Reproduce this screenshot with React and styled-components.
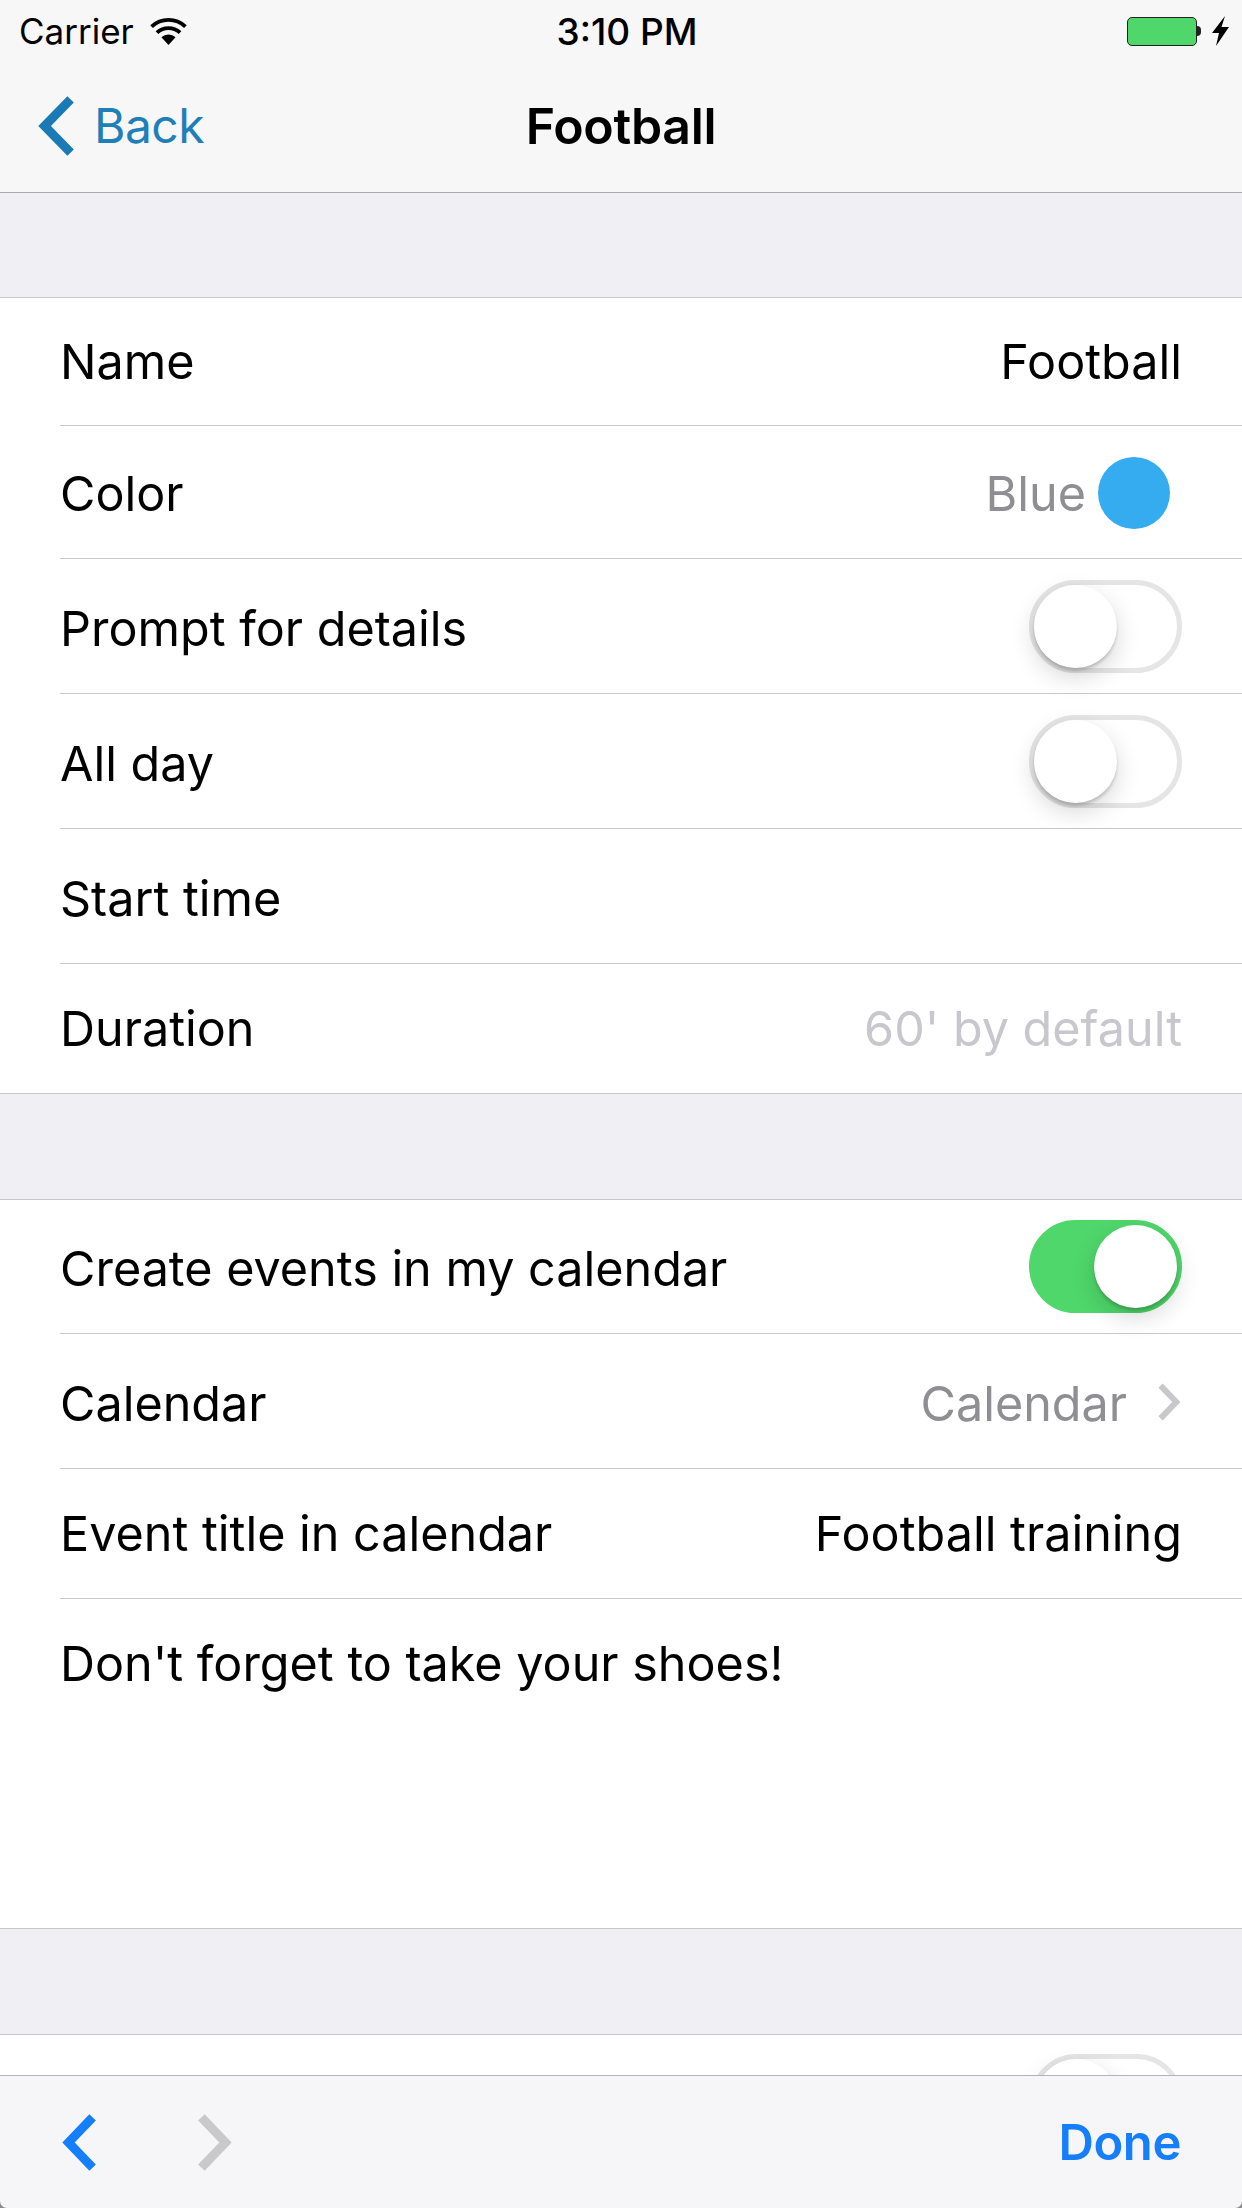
import React from "react";
import styled, { createGlobalStyle } from "styled-components";

const Global = createGlobalStyle`
  html, body { margin: 0; padding: 0; background: #fff; }
  * { box-sizing: border-box; }
`;

const Screen = styled.div`
  width: 1242px;
  height: 2208px;
  display: flex;
  flex-direction: column;
  overflow: hidden;
  background: #8a8a8a;
  font-family: Inter, "Liberation Sans", sans-serif;
  color: #000;
`;

const Header = styled.header`
  flex: none;
  height: 193px;
  background: #f7f7f8;
  border-bottom: 1px solid #a9a9ae;
  display: flex;
  flex-direction: column;
`;

const StatusBar = styled.div`
  height: 62px;
  padding: 0 13px 0 19px;
  display: grid;
  grid-template-columns: 1fr auto 1fr;
  align-items: center;
  font-size: 35px;
`;

const StatusLeft = styled.div`
  display: flex;
  align-items: center;
  gap: 16px;
`;

const StatusRight = styled.div`
  display: flex;
  align-items: center;
  justify-content: flex-end;
  gap: 9px;
`;

const Clock = styled.div`
  font-weight: 500;
  font-size: 37px;
  padding-left: 6px;
`;

const Battery = styled.div`
  width: 70px;
  height: 29px;
  border: 1.5px solid #222;
  border-radius: 5px;
  background: #4fd76b;
  margin-right: 6px;
  position: relative;
  &::after {
    content: "";
    position: absolute;
    left: 69px;
    top: 8px;
    width: 4px;
    height: 10px;
    background: #222;
    border-radius: 0 4px 4px 0;
  }
`;

const NavBar = styled.nav`
  flex: 1;
  padding-bottom: 3px;
  display: grid;
  grid-template-columns: 1fr auto 1fr;
  align-items: center;
`;

const BackLink = styled.div`
  display: flex;
  align-items: center;
  gap: 18px;
  padding-left: 36px;
  color: #1f7fb8;
  font-size: 48px;
  letter-spacing: -0.5px;
`;

const NavTitle = styled.div`
  font-size: 50px;
  font-weight: 600;
  letter-spacing: -0.3px;
`;

const Scroller = styled.main`
  flex: 1;
  min-height: 0;
  overflow: hidden;
  background: #efeff4;
`;

const Group = styled.section`
  background: #fff;
  border-top: 1px solid #c8c7cc;
  border-bottom: 1px solid #c8c7cc;
  margin-top: ${(p) => p.$gap}px;
`;

const Row = styled.div`
  height: ${(p) => p.$h}px;
  margin-left: 60px;
  padding-right: 60px;
  display: flex;
  align-items: ${(p) => (p.$top ? "flex-start" : "center")};
  justify-content: space-between;
  font-size: 48.5px;
  white-space: nowrap;
  padding-top: ${(p) => p.$pt || 0}px;
  padding-bottom: ${(p) => p.$pb || 0}px;
  & + & {
    box-shadow: 0 -1px 0 #c8c7cc;
  }
`;

const Label = styled.span`
  padding-top: ${(p) => p.$dy || 0}px;
`;

const Value = styled.div`
  display: flex;
  align-items: center;
  gap: ${(p) => p.$gap || 0}px;
  color: ${(p) => p.$color || "#000"};
`;

const ColorDot = styled.span`
  width: 72px;
  height: 72px;
  border-radius: 50%;
  background: #36acf0;
  margin-right: 12px;
`;

const Track = styled.div`
  width: 153px;
  height: 93px;
  border-radius: 47px;
  border: 5px solid ${(p) => (p.$on ? "#4fd76b" : "#e5e5e5")};
  background: ${(p) => (p.$on ? "#4fd76b" : "#fff")};
  display: flex;
  justify-content: ${(p) => (p.$on ? "flex-end" : "flex-start")};
  align-items: center;
`;

const Knob = styled.div`
  width: 83px;
  height: 83px;
  border-radius: 50%;
  background: #fff;
  box-shadow: 0 3px 3px rgba(0, 0, 0, 0.16), 0 9px 24px rgba(0, 0, 0, 0.16);
`;

const Toolbar = styled.footer`
  flex: none;
  height: 133px;
  background: #f6f6f8;
  border-top: 1px solid #b2b2b2;
  border-radius: 0 0 7px 7px;
  padding: 0 61px 0 60px;
  display: flex;
  align-items: center;
  gap: 98px;
`;

const DoneButton = styled.div`
  margin-left: auto;
  color: #157efb;
  font-size: 49px;
  font-weight: 600;
  letter-spacing: -0.4px;
`;

const Clip = styled.div`
  height: 41px;
  overflow: hidden;
  background: #fff;
  padding: 19px 59px 0 0;
  display: flex;
  justify-content: flex-end;
  align-items: flex-start;
  border-top: 1px solid #c8c7cc;
  margin-top: 105px;
`;

const WifiIcon = () => (
  <svg width="37" height="28" viewBox="0 0 35 27" preserveAspectRatio="none">
    <path d="M17.5 27 L10.8 19.6 A9.8 9.8 0 0 1 24.2 19.6 Z" fill="#000" />
    <path d="M6.6 15 A15.8 15.8 0 0 1 28.4 15" fill="none" stroke="#000" strokeWidth="3.6" />
    <path d="M1.5 9.2 A23 23 0 0 1 33.5 9.2" fill="none" stroke="#000" strokeWidth="3.6" />
  </svg>
);

const BoltIcon = () => (
  <svg width="17" height="30" viewBox="0 0 17 30">
    <path d="M13 0 L0 17 L7 17 L4 30 L17 11 L9.5 11 Z" fill="#000" />
  </svg>
);

const Chevron = ({ w, h, sw, color, left }) => (
  <svg width={w} height={h} viewBox={`0 0 ${w} ${h}`}>
    <path
      d={left
        ? `M${w - sw * 0.6} ${sw * 0.6} L${sw * 0.95} ${h / 2} L${w - sw * 0.6} ${h - sw * 0.6}`
        : `M${sw * 0.6} ${sw * 0.6} L${w - sw * 0.95} ${h / 2} L${sw * 0.6} ${h - sw * 0.6}`}
      fill="none"
      stroke={color}
      strokeWidth={sw}
    />
  </svg>
);

const Switch = ({ on }) => (
  <Track $on={on}>
    <Knob />
  </Track>
);

export default function App() {
  return (
    <Screen>
      <Global />
      <Header>
        <StatusBar>
          <StatusLeft>
            Carrier
            <WifiIcon />
          </StatusLeft>
          <Clock>3:10 PM</Clock>
          <StatusRight>
            <Battery />
            <BoltIcon />
          </StatusRight>
        </StatusBar>
        <NavBar>
          <BackLink>
            <Chevron w={40} h={64} sw={9} color="#1a7ab5" left />
            Back
          </BackLink>
          <NavTitle>Football</NavTitle>
        </NavBar>
      </Header>
      <Scroller>
        <Group $gap={104}>
          <Row $h={128} $pb={2}>
            <Label>Name</Label>
            <Value>Football</Value>
          </Row>
          <Row $h={133}>
            <Label $dy={2}>Color</Label>
            <Value $color="#8e8e93" $gap={12}>
              <Label $dy={2}>Blue</Label>
              <ColorDot />
            </Value>
          </Row>
          <Row $h={135}>
            <Label $dy={4}>Prompt for details</Label>
            <Switch />
          </Row>
          <Row $h={135}>
            <Label $dy={3}>All day</Label>
            <Switch />
          </Row>
          <Row $h={135}>
            <Label $dy={3}>Start time</Label>
          </Row>
          <Row $h={129}>
            <Label>Duration</Label>
            <Value $color="#c7c7cd">60' by default</Value>
          </Row>
        </Group>
        <Group $gap={105}>
          <Row $h={134} $pb={2}>
            <Label $dy={5}>Create events in my calendar</Label>
            <Switch on />
          </Row>
          <Row $h={135}>
            <Label $dy={3}>Calendar</Label>
            <Value $color="#8e8e93" $gap={30}>
              <Label $dy={3}>Calendar</Label>
              <Chevron w={25} h={40} sw={6} color="#c8c7cc" />
            </Value>
          </Row>
          <Row $h={130} $pb={2}>
            <Label>Event title in calendar</Label>
            <Value>Football training</Value>
          </Row>
          <Row $h={329} $top $pt={35}>
            <Label>Don't forget to take your shoes!</Label>
          </Row>
        </Group>
        <Clip>
          <Switch />
        </Clip>
      </Scroller>
      <Toolbar>
        <Chevron w={38} h={61} sw={9} color="#157efb" left />
        <Chevron w={38} h={61} sw={9} color="#c9c9c9" />
        <DoneButton>Done</DoneButton>
      </Toolbar>
    </Screen>
  );
}
